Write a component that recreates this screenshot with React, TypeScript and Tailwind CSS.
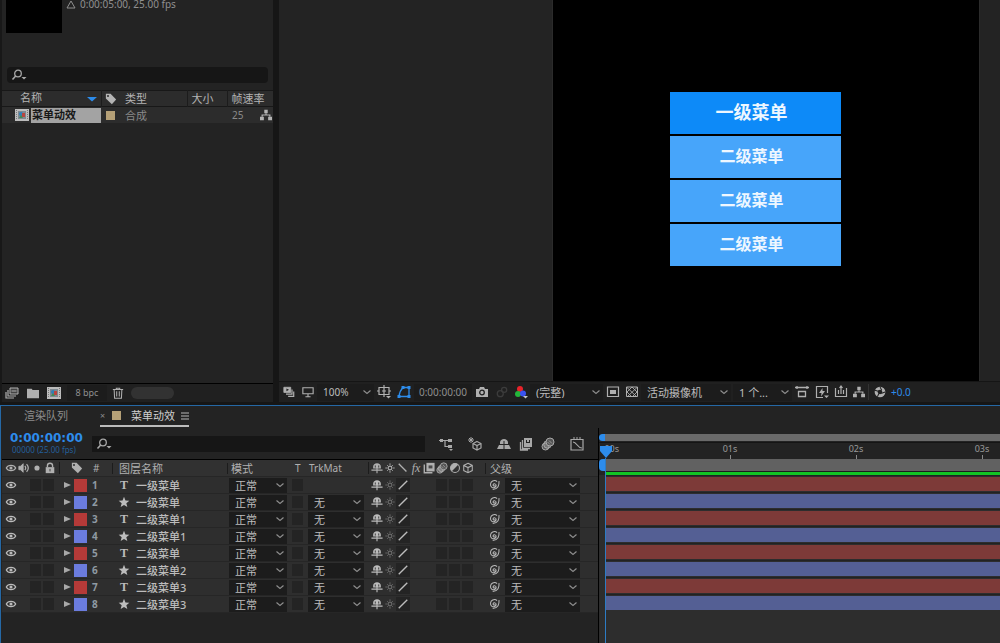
import type { ReactNode } from "react";

const layers = [
  { id: 1, kind: "text", name: "一级菜单" },
  { id: 2, kind: "shape", name: "一级菜单" },
  { id: 3, kind: "text", name: "二级菜单1" },
  { id: 4, kind: "shape", name: "二级菜单1" },
  { id: 5, kind: "text", name: "二级菜单" },
  { id: 6, kind: "shape", name: "二级菜单2" },
  { id: 7, kind: "text", name: "二级菜单3" },
  { id: 8, kind: "shape", name: "二级菜单3" },
];

// the later marks only appear once the window is wide enough
const seconds = [
  { label: "01s", show: "flex" },
  { label: "02s", show: "flex" },
  { label: "03s", show: "flex" },
  { label: "04s", show: "hidden xl:flex" },
  { label: "05s", show: "hidden xl:flex" },
];

const rowGrid =
  "grid grid-cols-[57px_53px_115px_63px_15px_63px_117px_113px] items-center";

/* ---------- icons ---------- */

function Icon({ children, size = "size-3.5" }: { children: ReactNode; size?: string }) {
  return (
    <svg viewBox="0 0 14 14" className={`${size} shrink-0`} fill="none" stroke="currentColor" aria-hidden="true">
      {children}
    </svg>
  );
}

const EyeIcon = () => (
  <Icon size="size-3">
    <path d="M1.500 7c2-4 9-4 11 0-2 4-9 4-11 0z" strokeWidth="1.400" />
    <circle cx="7" cy="7" r="1.800" fill="currentColor" stroke="none" />
  </Icon>
);

const SpeakerIcon = () => (
  <Icon size="size-3">
    <path d="M1 5h2l3-3v10L3 9H1z" fill="currentColor" />
    <path d="M8 4.500q2 2.500 0 5M10 2.500q4 4.500 0 9" strokeWidth="1.400" />
  </Icon>
);

const LockIcon = () => (
  <Icon size="size-3">
    <rect x="2" y="6" width="10" height="7" fill="currentColor" stroke="none" />
    <path d="M4 6V4.500a3 3 0 0 1 6 0V6" strokeWidth="1.600" />
    <path d="M7 8v3" stroke="#2e2e2e" />
  </Icon>
);

const TagIcon = () => (
  <Icon size="size-3">
    <path d="M1 1h5.500L13 7.500 8 13 1 6.500z" fill="currentColor" stroke="none" />
    <circle cx="3.500" cy="3.500" r="1.200" fill="#2e2e2e" stroke="none" />
  </Icon>
);

const StarIcon = () => (
  <Icon size="size-3">
    <path d="M7 1l1.700 4.200 4.500.3-3.500 2.900 1.200 4.400L7 10.400l-3.900 2.400 1.200-4.400L.8 5.500l4.500-.3z" fill="currentColor" stroke="none" />
  </Icon>
);

const ShyIcon = () => (
  <Icon size="size-3">
    <path d="M2.500 7.500V5.500C2.500 3 4.500 1.500 7 1.500s4.500 1.500 4.500 4v2z" fill="currentColor" stroke="none" />
    <path d="M.5 9.500h13M7 4v9" strokeWidth="1.300" />
    <path d="M5 4v2.500M9 4v2.500" stroke="#2e2e2e" />
  </Icon>
);

const SunIcon = () => (
  <Icon size="size-3">
    <circle cx="7" cy="7" r="2.200" strokeWidth="1.300" />
    <path d="M7 1.500v2M7 10.500v2M1.500 7h2M10.500 7h2M3.500 3.500l1 1M9.500 9.500l1 1M3.500 10.500l1-1M9.500 4.500l1-1" />
  </Icon>
);

const FilmIcon = () => (
  <Icon size="size-3">
    <path d="M4 1h9.500v10H4z" fill="currentColor" stroke="none" />
    <path d="M1.500 3v9.500H11" strokeWidth="1.600" />
    <path d="M6.500 4h4.500v3.500H6.500z" fill="#4a4a4a" stroke="none" />
  </Icon>
);

const BlurIcon = ({ size = "size-3" }: { size?: string }) => (
  <Icon size={size}>
    <circle cx="4.500" cy="9.500" r="3.500" fill="currentColor" fillOpacity=".4" />
    <circle cx="6.500" cy="7.500" r="3.800" fill="currentColor" fillOpacity=".4" />
    <circle cx="9" cy="5" r="4" fill="#555" />
    <path d="M6.500 5L9 7.500M8 3.500l3 3" strokeWidth=".8" />
  </Icon>
);

const AdjustIcon = () => (
  <Icon size="size-3">
    <circle cx="7" cy="7" r="5.200" strokeWidth="1.200" />
    <path d="M10.700 3.300A5.200 5.200 0 0 0 3.300 10.700z" fill="currentColor" stroke="none" />
  </Icon>
);

const CubeIcon = () => (
  <Icon size="size-3">
    <path d="M7 1.500l5 2.500v6l-5 2.500L2 10V4zM2 4l5 2.500L12 4M7 6.500v6" strokeWidth="1.200" />
  </Icon>
);

const SpiralIcon = () => (
  <Icon size="size-3">
    <path d="M8.500 7.500C7.500 9 5.500 8 6 6.500 6.800 5 9.500 5.500 9.500 7.500c0 2.500-3 3.500-5 2.200C2 8 2.500 3.500 5.500 2.300c2-.8 4-.3 5 .7M12.800 2.500c.5 5-1 9.500-7.300 9.800" strokeWidth="1.200" />
  </Icon>
);

const SearchIcon = () => (
  <svg viewBox="0 0 16 12" className="h-3 w-4 shrink-0" fill="none" stroke="currentColor" aria-hidden="true">
    <circle cx="7" cy="4.500" r="3.300" strokeWidth="1.300" />
    <path d="M4.700 7L1.500 10.500" strokeWidth="1.600" />
    <path d="M10.500 8h5L13 10.500z" fill="currentColor" stroke="none" />
  </svg>
);

const CompIcon = () => (
  <svg viewBox="0 0 14 12" className="h-3 w-3.5 shrink-0" aria-hidden="true">
    <path d="M0 0h14v12H0z" fill="#bcbcbc" />
    <path d="M1.500 1v10M12.500 1v10" stroke="#777" strokeDasharray="1 1" />
    <path d="M3 2h8v8H3z" fill="#7d8890" />
    <circle cx="6" cy="5" r="2" fill="#2f7fb8" />
    <path d="M7 4h3v4H7z" fill="#b8453f" />
    <path d="M4 9l2-3 2 3z" fill="#3d8a55" />
  </svg>
);

const FlowIcon = () => (
  <Icon size="size-3">
    <path d="M5 1h4v4H5zM0 9h4.500v4H0zM9.500 9H14v4H9.500z" fill="currentColor" stroke="none" />
    <path d="M7 5v2M2.500 9V7h9v2" strokeWidth="1.400" />
  </Icon>
);

const Caret = () => (
  <svg viewBox="0 0 8 5" className="pointer-events-none absolute right-[3px] top-1/2 h-[5px] w-2 -translate-y-1/2" fill="none" stroke="#8c8c8c" aria-hidden="true">
    <path d="M.5 1L4 4l3.500-3" strokeWidth="1.200" />
  </svg>
);

/* ---------- small controls ---------- */

function Dropdown({ label, value, className }: { label: string; value: string; className: string }) {
  return (
    <span className={`relative block bg-[#1c1c1c] ${className}`}>
      <select aria-label={label} className="block h-full w-full appearance-none pl-1.5 leading-none text-[#bcbcbc] outline-none">
        <option>{value}</option>
      </select>
      <Caret />
    </span>
  );
}

function Tool({ label, width, children }: { label: string; width: string; children: ReactNode }) {
  return (
    <button type="button" aria-label={label} className={`flex h-5 shrink-0 items-center justify-center ${width}`}>
      {children}
    </button>
  );
}

function Cell({ label }: { label: string }) {
  return <button type="button" aria-label={label} className="block h-3 w-[11px] bg-[#242424]" />;
}

/* ---------- project panel ---------- */

function ProjectPanel() {
  return (
    <section className="flex w-[273px] shrink-0 flex-col border-l-2 border-[#181818] bg-[#232323]">
      <div className="flex h-[67px] gap-1 pl-1">
        <div className="h-[33px] w-14 bg-black" />
        <p className="flex h-2 items-center gap-1 text-[10px] leading-2 text-[#8f8f8f]">
          <svg viewBox="0 0 10 9" className="h-[9px] w-2.5" fill="none" stroke="currentColor" aria-hidden="true">
            <path d="M1 8l4-7 4 7z" />
          </svg>
          0:00:05:00, 25.00 fps
        </p>
      </div>
      <label className="ml-[5px] mr-[5px] flex h-4 items-center rounded-sm bg-[#161616] pl-1 text-[#a8a8a8]">
        <SearchIcon />
        <input type="text" aria-label="搜索项目" className="w-full bg-transparent pl-1 outline-none" />
      </label>

      <table className="mt-[7px] w-full table-fixed text-left text-[#a8a8a8]">
        <colgroup>
          <col className="w-[99px]" />
          <col className="w-6" />
          <col className="w-[62px]" />
          <col className="w-10" />
          <col />
        </colgroup>
        <thead>
          <tr className="h-4 border-y border-[#181818] bg-[#2c2c2c] text-[#b4b4b4]">
            <th className="font-normal">
              <span className="flex h-[14px] items-center justify-between pl-[18px] pr-1">
                名称
                <svg viewBox="0 0 10 6" className="h-1.5 w-2.5" aria-hidden="true">
                  <path d="M0 1h10L5 5.500z" fill="#2d8ceb" />
                </svg>
              </span>
            </th>
            <th aria-label="标签" className="border-l border-[#1c1c1c] pl-[3px]">
              <TagIcon />
            </th>
            <th className="font-normal leading-none">类型</th>
            <th className="border-l border-[#1c1c1c] pl-1 font-normal leading-none">大小</th>
            <th className="border-l border-[#1c1c1c] pl-1 font-normal leading-none">帧速率</th>
          </tr>
        </thead>
        <tbody>
          <tr className="h-4 bg-[#2c2c2c]">
            <td>
              <span className="flex h-4 items-center pl-[13px]">
                <CompIcon />
                <span className="ml-0.5 flex h-[15px] flex-1 items-center bg-[#a3a3a3] pl-px font-bold text-[#181818]">
                  菜单动效
                </span>
              </span>
            </td>
            <td className="pl-[5px]">
              <span className="block size-[9px] bg-[#b5a077]" />
            </td>
            <td className="leading-none text-[#8a8a8a]">合成</td>
            <td />
            <td>
              <span className="flex items-center justify-between pl-[5px] pr-px text-[10px] leading-none text-[#8a8a8a]">
                25
                <span className="text-[#b4b4b4]">
                  <FlowIcon />
                </span>
              </span>
            </td>
          </tr>
        </tbody>
      </table>

      <div className="mt-auto flex h-[19px] items-center border-t border-black bg-[#202020] text-[#b0b0b0]">
        <Tool label="解释素材" width="w-5">
          <Icon>
            <path d="M5 2h8v6H5z" fill="#444" />
            <path d="M3 4v6h8M1 6v6h8M6.500 5h5" strokeWidth="1.200" />
          </Icon>
        </Tool>
        <Tool label="新建文件夹" width="w-[21px]">
          <Icon size="size-3">
            <path d="M0 2h5.500l1 1.500H14V13H0z" fill="currentColor" stroke="none" />
          </Icon>
        </Tool>
        <Tool label="新建合成" width="w-[22px]">
          <CompIcon />
        </Tool>
        <button type="button" className="ml-0.5 h-4 w-10 bg-[#1c1c1c] text-[9px] leading-4 text-[#8f8f8f]">
          8 bpc
        </button>
        <Tool label="删除" width="w-[22px]">
          <Icon size="size-3">
            <path d="M1 3h12M5 3V1.500h4V3M2.500 3l.5 10h8l.5-10M5.500 5v6M8.500 5v6" strokeWidth="1.200" />
          </Icon>
        </Tool>
        <span className="ml-0.5 h-3 w-[43px] rounded-full bg-[#323232]" />
      </div>
    </section>
  );
}

/* ---------- composition viewer ---------- */

function Viewer() {
  return (
    <section className="flex min-w-0 flex-1 flex-col bg-[#232323]">
      <div className="flex flex-1">
        <div className="w-[274px] shrink-0 border-r border-[#2b2b2b]" />
        <div className="flex-1 bg-black pl-[117px] pt-[92px]">
          <ul className="flex w-[171px] flex-col gap-0.5 text-center font-bold text-[#eef7ff]">
            <li className="bg-[#0d8af8] pb-0.5 pr-2 text-lg leading-10">一级菜单</li>
            <li className="bg-[#47a5fa] pb-0.5 pr-2 text-base leading-10">二级菜单</li>
            <li className="bg-[#47a5fa] pb-0.5 pr-2 text-base leading-10">二级菜单</li>
            <li className="bg-[#47a5fa] pb-0.5 pr-2 text-base leading-10">二级菜单</li>
          </ul>
        </div>
        <div className="w-[21px] shrink-0 border-l border-[#2b2b2b]" />
      </div>

      <div className="flex h-[21px] items-center overflow-hidden border-t border-[#151515] bg-[#202020] text-[#b0b0b0]">
        <Tool label="始终预览此视图" width="w-[19px]">
          <Icon size="size-3">
            <path d="M1 1.500h8v6H1z" fill="currentColor" />
            <path d="M10.500 4v5.500H3.500M12.500 6.500V12H6" strokeWidth="1.400" />
            <path d="M4 3v3l3-1.500z" fill="#202020" stroke="none" />
          </Icon>
        </Tool>
        <Tool label="主查看器" width="w-[19px]">
          <Icon size="size-3">
            <path d="M1 2h12v7H1zM7 9v3M4 12.500h6" strokeWidth="1.300" />
          </Icon>
        </Tool>
        <Dropdown label="放大率" value="100%" className="h-[17px] w-[57px] shrink-0 text-[10px]" />
        <Tool label="网格和参考线" width="w-5">
          <Icon>
            <path d="M2 2.500h10v7H2zM7 0v12M5 6h4M0 6h2M12 6h2" strokeWidth="1.200" />
            <path d="M9 11h5l-2.500 2.500z" fill="currentColor" stroke="none" />
          </Icon>
        </Tool>
        <Tool label="切换蒙版可见性" width="w-5">
          <span className="text-[#2d8ceb]">
            <Icon>
              <path d="M2 11.500C2.500 7 4 4.500 6 2.500h6v9z" strokeWidth="1.300" />
              <path d="M.5 10h3v3h-3zM10.500 10h3v3h-3zM10.500 1h3v3h-3zM4.500 1h3v3h-3z" fill="currentColor" stroke="none" />
            </Icon>
          </span>
        </Tool>
        <button type="button" className="h-[17px] w-[58px] shrink-0 bg-[#1c1c1c] text-[10px] leading-none text-[#8f8f8f]">
          0:00:00:00
        </button>
        <Tool label="拍摄快照" width="w-5">
          <Icon>
            <path d="M1 4h3l1-2h4l1 2h3v8H1z" fill="currentColor" stroke="none" />
            <circle cx="7" cy="7.500" r="2.300" stroke="#202020" strokeWidth="1.300" />
          </Icon>
        </Tool>
        <Tool label="显示快照" width="w-[19px]">
          <span className="text-[#3c3c3c]">
            <Icon size="size-3">
              <circle cx="5" cy="9" r="3.500" strokeWidth="1.500" />
              <circle cx="9.500" cy="4.500" r="3" strokeWidth="1.500" />
            </Icon>
          </span>
        </Tool>
        <Tool label="显示通道" width="w-[19px]">
          <Icon>
            <g stroke="none">
              <circle cx="6" cy="4" r="3" fill="#e8232a" />
              <circle cx="4" cy="9" r="3" fill="#23b53a" />
              <circle cx="9" cy="8.500" r="3" fill="#3a52f0" />
              <path d="M9 11h5l-2.500 2.500z" fill="#c4c4c4" />
            </g>
          </Icon>
        </Tool>
        <Dropdown label="分辨率" value="(完整)" className="h-[17px] w-[73px] shrink-0" />
        <Tool label="目标区域" width="w-5">
          <Icon>
            <path d="M1.500 2h11v9.500h-11z" strokeWidth="1.200" />
            <path d="M4 5h6v4H4z" fill="currentColor" stroke="none" />
          </Icon>
        </Tool>
        <Tool label="切换透明网格" width="w-[18px]">
          <Icon>
            <path d="M1.500 2h11v9.500h-11z" />
            <path d="M2 2.500l9.500 9M12 2.500l-9.500 9M7 2L2 7l4.500 4.500M7 2l5 5-4.500 4.500" strokeWidth=".9" />
          </Icon>
        </Tool>
        <Dropdown label="3D 视图" value="活动摄像机" className="h-[17px] w-[90px] shrink-0" />
        <span className="w-0.5 shrink-0" />
        <Dropdown label="视图布局" value="1 个..." className="h-[17px] w-[59px] shrink-0" />
        <Tool label="像素长宽比校正" width="w-5">
          <Icon>
            <path d="M0 2.500h14M2 1v3M12 1v3M3.500 6.500h7v5h-7z" strokeWidth="1.300" />
          </Icon>
        </Tool>
        <Tool label="快速预览" width="w-[19px]">
          <Icon>
            <path d="M12.500 8V1.500h-11v11H8" strokeWidth="1.200" />
            <path d="M7.500 3L4 8h2.500L6 11.500 10 6H7.500zM9 10.500h5L11.500 13z" fill="currentColor" stroke="none" />
          </Icon>
        </Tool>
        <Tool label="时间轴" width="w-[19px]">
          <Icon>
            <path d="M1.500 3v8.500h11V3M4.500 5v4M9.500 5v4M7 1v8M5.500 3L7 1l1.500 2" strokeWidth="1.200" />
          </Icon>
        </Tool>
        <Tool label="合成流程图" width="w-[18px]">
          <FlowIcon />
        </Tool>
        <span className="h-4 w-px shrink-0 bg-[#333]" />
        <Tool label="重置曝光度" width="w-[22px]">
          <Icon size="size-3">
            <circle cx="7" cy="7" r="4.500" strokeWidth="3.500" />
            <path d="M7 1l2 4M13 7L9 8.500M4 12.500L5.500 9M1 5l4 1" stroke="#202020" strokeWidth="1.200" />
          </Icon>
        </Tool>
        <button type="button" className="text-[10px] text-[#2d8ceb]">
          +0.0
        </button>
      </div>
    </section>
  );
}

/* ---------- timeline ---------- */

function LayerRow({ id, kind, name }: { id: number; kind: string; name: string }) {
  const isText = kind === "text";
  return (
    <tr className={`${rowGrid} h-[17px] border-t border-[#262626] bg-[#2e2e2e] text-[#bcbcbc]`}>
      <td className="flex items-center pl-[3px]">
        <button type="button" aria-label="可见" className="mr-[13px]">
          <EyeIcon />
        </button>
        <span className="flex gap-0.5">
          <Cell label="独奏" />
          <Cell label="锁定" />
        </span>
      </td>
      <td className="flex items-center pl-[5px]">
        <button type="button" aria-label="展开">
          <svg viewBox="0 0 7 8" className="h-2 w-[7px]" aria-hidden="true">
            <path d="M0 1l7 3-7 3z" fill="#a8a8a8" />
          </svg>
        </button>
        <span className={`ml-[3px] size-[13px] ${isText ? "bg-[#b53a38]" : "bg-[#6b7cde]"}`} />
        <span className="ml-[5px] text-[10px] font-bold leading-none text-[#8f9aa3]">{id}</span>
      </td>
      <td className="flex items-center pl-1.5">
        <span className="flex w-[18px] items-center">
          {isText ? <span className="w-3 text-center font-['Liberation_Serif',serif] text-xs font-bold leading-none">T</span> : <StarIcon />}
        </span>
        <span className="font-medium leading-none">{name}</span>
      </td>
      <td className="pl-0.5">
        <Dropdown label={`${name} 模式`} value="正常" className="h-[15px] w-[58px]" />
      </td>
      <td className="pl-0.5">
        <Cell label="保留基础透明度" />
      </td>
      <td className="pl-[3px]">
        {id > 1 && <Dropdown label={`${name} 轨道遮罩`} value="无" className="h-[15px] w-14" />}
      </td>
      <td className="flex items-center pl-[3px]">
        <ShyIcon />
        <span className="ml-px text-[#6c6c6c]">
          <SunIcon />
        </span>
        <span className="flex h-3.5 w-3.5 items-center justify-center bg-[#242424]">
          <Icon size="size-3">
            <path d="M2 12L12 2" strokeWidth="1.600" />
          </Icon>
        </span>
        <span className="ml-[26px] flex gap-0.5">
          <Cell label="运动模糊" />
          <Cell label="调整图层" />
          <Cell label="3D 图层" />
        </span>
      </td>
      <td className="flex items-center pl-[3px]">
        <SpiralIcon />
        <Dropdown label={`${name} 父级`} value="无" className="ml-[5px] h-[15px] w-[75px]" />
      </td>
    </tr>
  );
}

function LayerTable() {
  return (
    <table className="block">
      <thead className="block">
        <tr className={`${rowGrid} h-[17px] border-t border-black bg-[#313131] text-left text-[#b0b0b0] *:font-normal`}>
          <th className="flex items-center gap-px pl-[3px]">
            <EyeIcon />
            <SpeakerIcon />
            <Icon size="size-3">
              <circle cx="7" cy="7" r="3" fill="currentColor" stroke="none" />
            </Icon>
            <LockIcon />
          </th>
          <th className="flex items-center gap-2.5 border-l border-[#1c1c1c] pl-[11px] text-[10px] leading-none">
            <TagIcon />#
          </th>
          <th className="border-l border-[#1c1c1c] pl-1.5 leading-none">图层名称</th>
          <th className="border-l border-[#1c1c1c] pl-[3px] leading-none">模式</th>
          <th className="pl-[5px] text-[10px] leading-none">T</th>
          <th className="pl-1 text-[10px] leading-none">TrkMat</th>
          <th className="flex items-center gap-px border-l border-[#1c1c1c] pl-0.5">
            <ShyIcon />
            <SunIcon />
            <Icon size="size-3">
              <path d="M2 2l9 9" strokeWidth="1.500" />
            </Icon>
            <span className="w-3 text-center font-['Liberation_Serif',serif] text-xs italic leading-none">fx</span>
            <FilmIcon />
            <BlurIcon />
            <AdjustIcon />
            <CubeIcon />
          </th>
          <th className="border-l border-[#1c1c1c] pl-1 leading-none">父级</th>
        </tr>
      </thead>
      <tbody className="block border-b border-[#262626]">
        {layers.map((layer) => (
          <LayerRow key={layer.id} {...layer} />
        ))}
      </tbody>
    </table>
  );
}

function TimelineTools() {
  return (
    <div className="flex h-[31px] items-center">
      <div className="w-[90px] pl-2">
        <p className="font-['DejaVu_Sans',sans-serif] text-xs font-bold leading-3 text-[#2d8ceb]">0:00:00:00</p>
        <p className="pl-0.5 text-[8px] leading-3 text-[#235f9a]">00000 (25.00 fps)</p>
      </div>
      <label className="flex h-4 w-[333px] items-center bg-[#161616] pl-1 text-[#a8a8a8]">
        <SearchIcon />
        <input type="text" aria-label="搜索图层" className="w-full bg-transparent pl-1 outline-none" />
      </label>
      <div className="ml-2.5 flex items-center text-[#a8a8a8]">
        <Tool label="合成微型流程图" width="w-[22px]">
          <Icon>
            <path d="M0 3.500h9M6 3.500v6h3" strokeWidth="1.200" />
            <path d="M1 2h3v3H1zM9 2h4v3H9zM9 8h4v3H9zM10 12h4l-2 2z" fill="currentColor" stroke="none" />
          </Icon>
        </Tool>
        <Tool label="草图 3D" width="w-9">
          <Icon>
            <path d="M9 4.500l4 2v4.500l-4 2-4-2V6.500zM5 6.500l4 2 4-2M9 8.500V13" strokeWidth="1.200" />
            <path d="M3 0v6M0 3h6M1 1l4 4M5 1L1 5" />
          </Icon>
        </Tool>
        <Tool label="隐藏消隐图层" width="w-[22px]">
          <Icon>
            <path d="M3 7V5.500C3 3.500 5 2 7 2s4 1.500 4 3.500V7zM0 12l2-4h10l2 4z" fill="currentColor" stroke="none" />
            <path d="M7 4v8M4.500 7.500h5" stroke="#232323" />
          </Icon>
        </Tool>
        <Tool label="启用帧混合" width="w-[22px]">
          <Icon>
            <path d="M5 1h8v9H5z" fill="currentColor" stroke="none" />
            <path d="M3.500 3v8.500H11M1.500 5v8H9" strokeWidth="1.300" />
            <path d="M7.500 3v3M10.500 3v3M7.500 5.500h3" stroke="#232323" />
          </Icon>
        </Tool>
        <Tool label="启用运动模糊" width="w-[22px]">
          <BlurIcon size="size-3.5" />
        </Tool>
        <Tool label="图表编辑器" width="w-9">
          <Icon>
            <path d="M1 2.500h12v10.500H1zM3 5c4 0 4 6 9 6" strokeWidth="1.200" />
            <path d="M4 0v2M7 0v2M10 0v2" />
          </Icon>
        </Tool>
      </div>
    </div>
  );
}

function Tracks() {
  return (
    <div className="relative flex min-w-0 flex-1 flex-col overflow-hidden border-l border-black bg-[#232323]">
      <div className="mt-1.5 flex h-[7px]">
        <span className="w-1.5 rounded-l-full bg-[#2d8ceb]" />
        <span className="flex-1 bg-[#6a6a6a]" />
      </div>
      <div className="mt-px flex h-[17px] border-t border-[#151515] text-[9px] leading-3 text-[#9a9a9a]">
        <span className="w-[68px] shrink-0 pl-[3px]">:00s</span>
        {seconds.map(({ label, show }) => (
          <span key={label} className={`w-[126px] shrink-0 flex-col items-center ${show}`}>
            {label}
            <span className="h-1 w-px bg-[#8a8a8a]" />
          </span>
        ))}
      </div>
      <div className="flex h-3">
        <span className="w-1.5 rounded-l bg-[#2d8ceb]" />
        <span className="flex-1 bg-[#616161]" />
      </div>
      <div className="ml-1.5 h-1 border-t border-[#1c1c1c] bg-[#12c424]" />
      <div className="flex-1 bg-[#2d2d2d] pl-1.5">
        {layers.map(({ id, kind }) => (
          <div key={id} className="flex h-[17px] items-center border-t border-[#222]">
            <span className={`h-3.5 w-full ${kind === "text" ? "bg-[#7d3a38]" : "bg-[#545f94]"}`} />
          </div>
        ))}
      </div>

      {/* playhead */}
      <div className="absolute bottom-0 left-0 top-[18px] flex w-[13px] flex-col items-center">
        <svg viewBox="0 0 12 12" className="h-3 w-3" aria-hidden="true">
          <path d="M0 0h12v5l-6 7-6-7z" fill="#2d8ceb" />
        </svg>
        <span className="w-px flex-1 bg-[#2d7cc4]" />
      </div>
    </div>
  );
}

function Timeline() {
  return (
    <section className="flex flex-col border-l border-t border-[#2568a5] bg-[#232323] pl-px">
      <div className="flex h-[22px] items-start text-[#b8b8b8]">
        <button type="button" className="ml-[22px] h-5 leading-5 text-[#8c8c8c]">
          渲染队列
        </button>
        <div className="ml-8 flex h-[21px] items-center border-b-2 border-[#bcbcbc]">
          <button type="button" aria-label="关闭" className="w-3 text-left text-[9px] leading-none text-[#8c8c8c]">
            ×
          </button>
          <span className="size-[9px] bg-[#b5a077]" />
          <button type="button" className="ml-2.5 leading-5 text-[#cfcfcf]">
            菜单动效
          </button>
          <button type="button" aria-label="面板菜单" className="ml-1.5">
            <svg viewBox="0 0 8 8" className="size-2" stroke="currentColor" aria-hidden="true">
              <path d="M0 1h8M0 4h8M0 7h8" />
            </svg>
          </button>
        </div>
      </div>
      <div className="flex">
        <div className="w-[596px] shrink-0 pb-[30px]">
          <TimelineTools />
          <LayerTable />
        </div>
        <Tracks />
      </div>
    </section>
  );
}

export default function App() {
  return (
    <main className="flex min-h-screen flex-col bg-[#161616] font-['Noto_Sans','Noto_Sans_CJK_SC',sans-serif] text-[11px]">
      <div className="flex flex-1 gap-1.5 pb-[3px]">
        <ProjectPanel />
        <Viewer />
      </div>
      <Timeline />
    </main>
  );
}
